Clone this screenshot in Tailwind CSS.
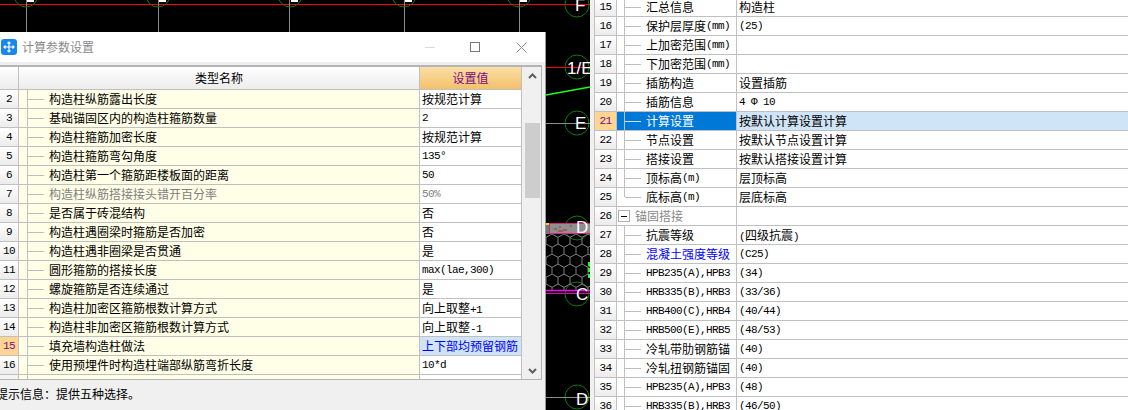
<!DOCTYPE html>
<html lang="en">
<head>
    <meta charset="UTF-8">
    <title>计算参数设置</title>
    <script src="https://cdn.jsdelivr.net/npm/@tailwindcss/browser@4"></script>
</head>
<body class="bg-black">
<div class="flex w-[1128px] h-[410px] overflow-hidden bg-black text-[12px] leading-[18px] text-black font-['Noto_Sans_CJK_SC',sans-serif]">

    <!-- CAD canvas + dialog window -->
    <div class="relative w-[590px] h-[410px] shrink-0">
        <svg class="absolute inset-0" width="590" height="410" viewBox="0 0 590 410" fill="none">
            <defs>
                <pattern id="hex" width="12" height="20" patternUnits="userSpaceOnUse" x="546" y="234">
                    <path d="M6 0L12 3.33V10L6 13.33L0 10V3.33ZM6 13.33V20" stroke="#808080" stroke-width="1"/>
                </pattern>
            </defs>
            <!-- top axis -->
            <path d="M0 4.5H590" stroke="#ff0000"/>
            <path d="M26.5 0V32M158.5 0V32M289.5 0V32M404.5 0V32M519.5 0V32" stroke="#8c8c8c"/>
            <g stroke="#0a7a0a">
                <circle cx="26" cy="-5" r="12"/>
                <circle cx="158" cy="-5" r="12"/>
                <circle cx="290" cy="-5" r="12"/>
                <circle cx="404" cy="-5" r="12"/>
                <circle cx="519" cy="-5" r="12"/>
                <circle cx="577" cy="5" r="12"/>
                <circle cx="577" cy="67" r="12"/>
                <circle cx="577" cy="123" r="12"/>
                <circle cx="577" cy="228" r="12"/>
                <circle cx="577" cy="294" r="12"/>
                <circle cx="577" cy="397" r="12"/>
            </g>
            <path d="M27 1H34M159 1H166M291 1H298M405 1H412M520 1H527" stroke="#ffffff" stroke-width="2"/>
            <path d="M546 67.5H590" stroke="#ff0000"/>
            <path d="M546 95L590 87" stroke="#19ff19" stroke-width="1.5"/>
            <path d="M546 123.5H590M546 397.5H590" stroke="#8c8c8c"/>
            <!-- hatched wall -->
            <rect x="546" y="234" width="44" height="56" fill="url(#hex)"/>
            <rect x="546" y="223" width="4" height="11" fill="#777777"/>
            <rect x="546" y="223" width="4" height="2" fill="#e6e600"/>
            <rect x="549.5" y="223.5" width="41" height="10" fill="#8f8f8f" stroke="#e0207a"/>
            <path d="M554 229h3M559 227h2M563 230h4M570 226h2M558 231h5" stroke="#a03030"/>
            <path d="M546 290.5H590" stroke="#ff00ff" stroke-width="1.5"/>
            <path d="M546 293.5H590" stroke="#e000c0"/>
            <path d="M589 262V280" stroke="#19ff19" stroke-width="2" stroke-dasharray="4 2"/>
            <!-- axis labels -->
            <g fill="#ffffff" font-family="Liberation Sans, sans-serif" font-size="17">
                <text x="575" y="11">F</text>
                <text x="567" y="74">1/E</text>
                <text x="575" y="129">E</text>
                <text x="576" y="233">D</text>
                <text x="576" y="300">C</text>
                <text x="576" y="405">D</text>
            </g>
        </svg>

        <div class="absolute left-0 top-[32px] w-[546px] h-[378px] bg-[#f0f0f0] border-r border-[#9a9a9a] flex flex-col">
            <!-- title bar -->
            <div class="flex items-center h-[30px] bg-white shrink-0">
                <svg class="ml-[1px]" width="16" height="16" viewBox="0 0 16 16" fill="none">
                    <rect width="16" height="16" rx="3" fill="#1787ea"/>
                    <path d="M8 3V13M3 8H13M6.5 4.5L8 3L9.5 4.5M6.5 11.5L8 13L9.5 11.5M4.5 6.5L3 8L4.5 9.5M11.5 6.5L13 8L11.5 9.5" stroke="#ffffff" stroke-width="1.2"/>
                </svg>
                <span class="ml-[5px] text-[#8a8a8a]">计算参数设置</span>
                <div class="ml-auto flex items-center">
                    <span class="w-[10px] h-px bg-[#d8d8d8]"></span>
                    <span class="ml-[35px] w-[10px] h-[10px] border border-[#777777]"></span>
                    <svg class="ml-[36px] mr-[18px]" width="11" height="11" viewBox="0 0 11 11" fill="none">
                        <path d="M0.5 0.5L10.5 10.5M10.5 0.5L0.5 10.5" stroke="#8a8a8a"/>
                    </svg>
                </div>
            </div>

            <!-- grid -->
            <div class="mt-[3px] ml-0 mr-[3px] h-[315px] border-t-2 border-r border-b border-[#b4b4b4] flex overflow-hidden shrink-0">
                <div class="w-[522px] shrink-0 overflow-hidden">
                    <div class="flex h-[23px] border-b border-[#c0c0c0]">
                        <div class="w-[19px] border-r border-[#c0c0c0] bg-linear-to-b from-white to-[#ececec]"></div>
                        <div class="w-[401px] border-r border-[#c0c0c0] bg-linear-to-b from-white to-[#ececec] text-center leading-[22px]">类型名称</div>
                        <div class="w-[102px] border-r border-[#c0c0c0] bg-linear-to-b from-[#fbdfa6] to-[#f3c16b] text-center leading-[22px] text-[#7a0a84]">设置值</div>
                    </div>

                    <div class="flex h-[19px] border-b border-[#c0c0c0]">
                        <div class="w-[19px] border-r border-[#c0c0c0] bg-linear-to-b from-white to-[#ececec] text-center font-['Liberation_Mono'] text-[11px] tracking-[-0.6px]">2</div>
                        <div class="w-[9px] border-r border-[#c0c0c0] bg-[#fffee6]"></div>
                        <div class="w-[392px] border-r border-[#c0c0c0] bg-[#fffee6] flex items-center"><span class="w-[16px] h-px bg-[#bdbdbd] mr-[5px]"></span>构造柱纵筋露出长度</div>
                        <div class="w-[102px] border-r border-[#c0c0c0] bg-white pl-[2px]">按规范计算</div>
                    </div>
                    <div class="flex h-[19px] border-b border-[#c0c0c0]">
                        <div class="w-[19px] border-r border-[#c0c0c0] bg-linear-to-b from-white to-[#ececec] text-center font-['Liberation_Mono'] text-[11px] tracking-[-0.6px]">3</div>
                        <div class="w-[9px] border-r border-[#c0c0c0] bg-[#fffee6]"></div>
                        <div class="w-[392px] border-r border-[#c0c0c0] bg-[#fffee6] flex items-center"><span class="w-[16px] h-px bg-[#bdbdbd] mr-[5px]"></span>基础锚固区内的构造柱箍筋数量</div>
                        <div class="w-[102px] border-r border-[#c0c0c0] bg-white pl-[2px] font-['Liberation_Mono'] text-[11px] tracking-[-0.6px]">2</div>
                    </div>
                    <div class="flex h-[19px] border-b border-[#c0c0c0]">
                        <div class="w-[19px] border-r border-[#c0c0c0] bg-linear-to-b from-white to-[#ececec] text-center font-['Liberation_Mono'] text-[11px] tracking-[-0.6px]">4</div>
                        <div class="w-[9px] border-r border-[#c0c0c0] bg-[#fffee6]"></div>
                        <div class="w-[392px] border-r border-[#c0c0c0] bg-[#fffee6] flex items-center"><span class="w-[16px] h-px bg-[#bdbdbd] mr-[5px]"></span>构造柱箍筋加密长度</div>
                        <div class="w-[102px] border-r border-[#c0c0c0] bg-white pl-[2px]">按规范计算</div>
                    </div>
                    <div class="flex h-[19px] border-b border-[#c0c0c0]">
                        <div class="w-[19px] border-r border-[#c0c0c0] bg-linear-to-b from-white to-[#ececec] text-center font-['Liberation_Mono'] text-[11px] tracking-[-0.6px]">5</div>
                        <div class="w-[9px] border-r border-[#c0c0c0] bg-[#fffee6]"></div>
                        <div class="w-[392px] border-r border-[#c0c0c0] bg-[#fffee6] flex items-center"><span class="w-[16px] h-px bg-[#bdbdbd] mr-[5px]"></span>构造柱箍筋弯勾角度</div>
                        <div class="w-[102px] border-r border-[#c0c0c0] bg-white pl-[2px] font-['Liberation_Mono'] text-[11px] tracking-[-0.6px]">135°</div>
                    </div>
                    <div class="flex h-[19px] border-b border-[#c0c0c0]">
                        <div class="w-[19px] border-r border-[#c0c0c0] bg-linear-to-b from-white to-[#ececec] text-center font-['Liberation_Mono'] text-[11px] tracking-[-0.6px]">6</div>
                        <div class="w-[9px] border-r border-[#c0c0c0] bg-[#fffee6]"></div>
                        <div class="w-[392px] border-r border-[#c0c0c0] bg-[#fffee6] flex items-center"><span class="w-[16px] h-px bg-[#bdbdbd] mr-[5px]"></span>构造柱第一个箍筋距楼板面的距离</div>
                        <div class="w-[102px] border-r border-[#c0c0c0] bg-white pl-[2px] font-['Liberation_Mono'] text-[11px] tracking-[-0.6px]">50</div>
                    </div>
                    <div class="flex h-[19px] border-b border-[#c0c0c0]">
                        <div class="w-[19px] border-r border-[#c0c0c0] bg-linear-to-b from-white to-[#ececec] text-center font-['Liberation_Mono'] text-[11px] tracking-[-0.6px]">7</div>
                        <div class="w-[9px] border-r border-[#c0c0c0] bg-[#fffee6]"></div>
                        <div class="w-[392px] border-r border-[#c0c0c0] bg-[#fffee6] flex items-center text-[#808080]"><span class="w-[16px] h-px bg-[#bdbdbd] mr-[5px]"></span>构造柱纵筋搭接接头错开百分率</div>
                        <div class="w-[102px] border-r border-[#c0c0c0] bg-white pl-[2px] font-['Liberation_Mono'] text-[11px] tracking-[-0.6px] text-[#808080]">50%</div>
                    </div>
                    <div class="flex h-[19px] border-b border-[#c0c0c0]">
                        <div class="w-[19px] border-r border-[#c0c0c0] bg-linear-to-b from-white to-[#ececec] text-center font-['Liberation_Mono'] text-[11px] tracking-[-0.6px]">8</div>
                        <div class="w-[9px] border-r border-[#c0c0c0] bg-[#fffee6]"></div>
                        <div class="w-[392px] border-r border-[#c0c0c0] bg-[#fffee6] flex items-center"><span class="w-[16px] h-px bg-[#bdbdbd] mr-[5px]"></span>是否属于砖混结构</div>
                        <div class="w-[102px] border-r border-[#c0c0c0] bg-white pl-[2px]">否</div>
                    </div>
                    <div class="flex h-[19px] border-b border-[#c0c0c0]">
                        <div class="w-[19px] border-r border-[#c0c0c0] bg-linear-to-b from-white to-[#ececec] text-center font-['Liberation_Mono'] text-[11px] tracking-[-0.6px]">9</div>
                        <div class="w-[9px] border-r border-[#c0c0c0] bg-[#fffee6]"></div>
                        <div class="w-[392px] border-r border-[#c0c0c0] bg-[#fffee6] flex items-center"><span class="w-[16px] h-px bg-[#bdbdbd] mr-[5px]"></span>构造柱遇圈梁时箍筋是否加密</div>
                        <div class="w-[102px] border-r border-[#c0c0c0] bg-white pl-[2px]">否</div>
                    </div>
                    <div class="flex h-[19px] border-b border-[#c0c0c0]">
                        <div class="w-[19px] border-r border-[#c0c0c0] bg-linear-to-b from-white to-[#ececec] text-center font-['Liberation_Mono'] text-[11px] tracking-[-0.6px]">10</div>
                        <div class="w-[9px] border-r border-[#c0c0c0] bg-[#fffee6]"></div>
                        <div class="w-[392px] border-r border-[#c0c0c0] bg-[#fffee6] flex items-center"><span class="w-[16px] h-px bg-[#bdbdbd] mr-[5px]"></span>构造柱遇非圈梁是否贯通</div>
                        <div class="w-[102px] border-r border-[#c0c0c0] bg-white pl-[2px]">是</div>
                    </div>
                    <div class="flex h-[19px] border-b border-[#c0c0c0]">
                        <div class="w-[19px] border-r border-[#c0c0c0] bg-linear-to-b from-white to-[#ececec] text-center font-['Liberation_Mono'] text-[11px] tracking-[-0.6px]">11</div>
                        <div class="w-[9px] border-r border-[#c0c0c0] bg-[#fffee6]"></div>
                        <div class="w-[392px] border-r border-[#c0c0c0] bg-[#fffee6] flex items-center"><span class="w-[16px] h-px bg-[#bdbdbd] mr-[5px]"></span>圆形箍筋的搭接长度</div>
                        <div class="w-[102px] border-r border-[#c0c0c0] bg-white pl-[2px] font-['Liberation_Mono'] text-[11px] tracking-[-0.6px]">max(lae,300)</div>
                    </div>
                    <div class="flex h-[19px] border-b border-[#c0c0c0]">
                        <div class="w-[19px] border-r border-[#c0c0c0] bg-linear-to-b from-white to-[#ececec] text-center font-['Liberation_Mono'] text-[11px] tracking-[-0.6px]">12</div>
                        <div class="w-[9px] border-r border-[#c0c0c0] bg-[#fffee6]"></div>
                        <div class="w-[392px] border-r border-[#c0c0c0] bg-[#fffee6] flex items-center"><span class="w-[16px] h-px bg-[#bdbdbd] mr-[5px]"></span>螺旋箍筋是否连续通过</div>
                        <div class="w-[102px] border-r border-[#c0c0c0] bg-white pl-[2px]">是</div>
                    </div>
                    <div class="flex h-[19px] border-b border-[#c0c0c0]">
                        <div class="w-[19px] border-r border-[#c0c0c0] bg-linear-to-b from-white to-[#ececec] text-center font-['Liberation_Mono'] text-[11px] tracking-[-0.6px]">13</div>
                        <div class="w-[9px] border-r border-[#c0c0c0] bg-[#fffee6]"></div>
                        <div class="w-[392px] border-r border-[#c0c0c0] bg-[#fffee6] flex items-center"><span class="w-[16px] h-px bg-[#bdbdbd] mr-[5px]"></span>构造柱加密区箍筋根数计算方式</div>
                        <div class="w-[102px] border-r border-[#c0c0c0] bg-white pl-[2px]">向上取整<span class="font-['Liberation_Mono'] text-[11px] tracking-[-0.6px]">+1</span></div>
                    </div>
                    <div class="flex h-[19px] border-b border-[#c0c0c0]">
                        <div class="w-[19px] border-r border-[#c0c0c0] bg-linear-to-b from-white to-[#ececec] text-center font-['Liberation_Mono'] text-[11px] tracking-[-0.6px]">14</div>
                        <div class="w-[9px] border-r border-[#c0c0c0] bg-[#fffee6]"></div>
                        <div class="w-[392px] border-r border-[#c0c0c0] bg-[#fffee6] flex items-center"><span class="w-[16px] h-px bg-[#bdbdbd] mr-[5px]"></span>构造柱非加密区箍筋根数计算方式</div>
                        <div class="w-[102px] border-r border-[#c0c0c0] bg-white pl-[2px]">向上取整<span class="font-['Liberation_Mono'] text-[11px] tracking-[-0.6px]">-1</span></div>
                    </div>
                    <div class="flex h-[19px] border-b border-[#c0c0c0]">
                        <div class="w-[19px] border-r border-[#c0c0c0] bg-[#ffd591] text-center font-['Liberation_Mono'] text-[11px] tracking-[-0.6px] text-[#7a0a84]">15</div>
                        <div class="w-[9px] border-r border-[#c0c0c0] bg-[#fffee6]"></div>
                        <div class="w-[392px] border-r border-[#c0c0c0] bg-[#fffee6] flex items-center"><span class="w-[16px] h-px bg-[#bdbdbd] mr-[5px]"></span>填充墙构造柱做法</div>
                        <div class="w-[102px] border-r border-[#c0c0c0] bg-[#cfe4f7] pl-[2px] text-[#0000ff] whitespace-nowrap">上下部均预留钢筋</div>
                    </div>
                    <div class="flex h-[19px] border-b border-[#c0c0c0]">
                        <div class="w-[19px] border-r border-[#c0c0c0] bg-linear-to-b from-white to-[#ececec] text-center font-['Liberation_Mono'] text-[11px] tracking-[-0.6px]">16</div>
                        <div class="w-[9px] border-r border-[#c0c0c0] bg-[#fffee6]"></div>
                        <div class="w-[392px] border-r border-[#c0c0c0] bg-[#fffee6] flex items-center"><span class="w-[16px] h-px bg-[#bdbdbd] mr-[5px]"></span>使用预埋件时构造柱端部纵筋弯折长度</div>
                        <div class="w-[102px] border-r border-[#c0c0c0] bg-white pl-[2px] font-['Liberation_Mono'] text-[11px] tracking-[-0.6px]">10*d</div>
                    </div>
                    <div class="flex h-[19px]">
                        <div class="w-[19px] border-r border-[#c0c0c0] bg-[#f4f4f4]"></div>
                        <div class="w-[9px] border-r border-[#c0c0c0] bg-[#fffee6]"></div>
                        <div class="w-[392px] border-r border-[#c0c0c0] bg-[#fffee6]"></div>
                        <div class="w-[102px] border-r border-[#c0c0c0] bg-white"></div>
                    </div>
                </div>

                <!-- scrollbar -->
                <div class="flex-1 flex flex-col items-center bg-[#f0f0f0] pl-[1px]">
                    <svg class="mt-[6px]" width="9" height="6" viewBox="0 0 9 6" fill="none"><path d="M1 5L4.5 1.5L8 5" stroke="#606060" stroke-width="2"/></svg>
                    <div class="mt-[44px] w-[15px] h-[75px] bg-[#cdcdcd]"></div>
                    <svg class="mt-auto mb-[5px]" width="9" height="6" viewBox="0 0 9 6" fill="none"><path d="M1 1L4.5 4.5L8 1" stroke="#606060" stroke-width="2"/></svg>
                </div>
            </div>

            <div class="ml-[-4px] mt-[5px] whitespace-nowrap">提示信息：提供五种选择。</div>
        </div>
    </div>

    <!-- property panel -->
    <div class="flex-1 h-[410px] overflow-hidden bg-[#f0f0f0] pl-[4px]">
        <div class="h-[432px] mt-[-2px] bg-white border-l border-[#c0c0c0]">
            <div class="flex h-[19px] border-b border-[#c0c0c0]">
                <div class="w-[22px] border-r border-[#c0c0c0] bg-linear-to-b from-white to-[#ececec] text-center font-['Liberation_Mono'] text-[11px] tracking-[-0.6px]">15</div>
                <div class="w-[8px] border-r border-[#c0c0c0]"></div>
                <div class="w-[112px] border-r border-[#c0c0c0] flex items-center whitespace-nowrap overflow-hidden"><span class="w-[16px] h-px bg-[#bdbdbd] mr-[5px] shrink-0"></span>汇总信息</div>
                <div class="flex-1 pl-[2px]">构造柱</div>
            </div>
            <div class="flex h-[19px] border-b border-[#c0c0c0]">
                <div class="w-[22px] border-r border-[#c0c0c0] bg-linear-to-b from-white to-[#ececec] text-center font-['Liberation_Mono'] text-[11px] tracking-[-0.6px]">16</div>
                <div class="w-[8px] border-r border-[#c0c0c0]"></div>
                <div class="w-[112px] border-r border-[#c0c0c0] flex items-center whitespace-nowrap overflow-hidden"><span class="w-[16px] h-px bg-[#bdbdbd] mr-[5px] shrink-0"></span>保护层厚度<span class="font-['Liberation_Mono'] text-[11px] tracking-[-0.6px]">(mm)</span></div>
                <div class="flex-1 pl-[2px] font-['Liberation_Mono'] text-[11px] tracking-[-0.6px]">(25)</div>
            </div>
            <div class="flex h-[19px] border-b border-[#c0c0c0]">
                <div class="w-[22px] border-r border-[#c0c0c0] bg-linear-to-b from-white to-[#ececec] text-center font-['Liberation_Mono'] text-[11px] tracking-[-0.6px]">17</div>
                <div class="w-[8px] border-r border-[#c0c0c0]"></div>
                <div class="w-[112px] border-r border-[#c0c0c0] flex items-center whitespace-nowrap overflow-hidden"><span class="w-[16px] h-px bg-[#bdbdbd] mr-[5px] shrink-0"></span>上加密范围<span class="font-['Liberation_Mono'] text-[11px] tracking-[-0.6px]">(mm)</span></div>
                <div class="flex-1 pl-[2px]"></div>
            </div>
            <div class="flex h-[19px] border-b border-[#c0c0c0]">
                <div class="w-[22px] border-r border-[#c0c0c0] bg-linear-to-b from-white to-[#ececec] text-center font-['Liberation_Mono'] text-[11px] tracking-[-0.6px]">18</div>
                <div class="w-[8px] border-r border-[#c0c0c0]"></div>
                <div class="w-[112px] border-r border-[#c0c0c0] flex items-center whitespace-nowrap overflow-hidden"><span class="w-[16px] h-px bg-[#bdbdbd] mr-[5px] shrink-0"></span>下加密范围<span class="font-['Liberation_Mono'] text-[11px] tracking-[-0.6px]">(mm)</span></div>
                <div class="flex-1 pl-[2px]"></div>
            </div>
            <div class="flex h-[19px] border-b border-[#c0c0c0]">
                <div class="w-[22px] border-r border-[#c0c0c0] bg-linear-to-b from-white to-[#ececec] text-center font-['Liberation_Mono'] text-[11px] tracking-[-0.6px]">19</div>
                <div class="w-[8px] border-r border-[#c0c0c0]"></div>
                <div class="w-[112px] border-r border-[#c0c0c0] flex items-center whitespace-nowrap overflow-hidden"><span class="w-[16px] h-px bg-[#bdbdbd] mr-[5px] shrink-0"></span>插筋构造</div>
                <div class="flex-1 pl-[2px]">设置插筋</div>
            </div>
            <div class="flex h-[19px] border-b border-[#c0c0c0]">
                <div class="w-[22px] border-r border-[#c0c0c0] bg-linear-to-b from-white to-[#ececec] text-center font-['Liberation_Mono'] text-[11px] tracking-[-0.6px]">20</div>
                <div class="w-[8px] border-r border-[#c0c0c0]"></div>
                <div class="w-[112px] border-r border-[#c0c0c0] flex items-center whitespace-nowrap overflow-hidden"><span class="w-[16px] h-px bg-[#bdbdbd] mr-[5px] shrink-0"></span>插筋信息</div>
                <div class="flex-1 pl-[2px] font-['Liberation_Mono'] text-[11px] tracking-[-0.6px]">4 Φ 10</div>
            </div>
            <div class="flex h-[19px] border-b border-[#c0c0c0]">
                <div class="w-[22px] border-r border-[#c0c0c0] bg-[#ffd591] text-center font-['Liberation_Mono'] text-[11px] tracking-[-0.6px] text-[#7a0a84]">21</div>
                <div class="w-[8px] border-r border-[#c0c0c0] bg-[#0078d7]"></div>
                <div class="w-[112px] border-r border-[#c0c0c0] bg-[#0078d7] text-white flex items-center whitespace-nowrap overflow-hidden"><span class="w-[16px] h-px bg-[#cfe4f7] mr-[5px] shrink-0"></span>计算设置</div>
                <div class="flex-1 pl-[2px] bg-[#cfe4f7]">按默认计算设置计算</div>
            </div>
            <div class="flex h-[19px] border-b border-[#c0c0c0]">
                <div class="w-[22px] border-r border-[#c0c0c0] bg-linear-to-b from-white to-[#ececec] text-center font-['Liberation_Mono'] text-[11px] tracking-[-0.6px]">22</div>
                <div class="w-[8px] border-r border-[#c0c0c0]"></div>
                <div class="w-[112px] border-r border-[#c0c0c0] flex items-center whitespace-nowrap overflow-hidden"><span class="w-[16px] h-px bg-[#bdbdbd] mr-[5px] shrink-0"></span>节点设置</div>
                <div class="flex-1 pl-[2px]">按默认节点设置计算</div>
            </div>
            <div class="flex h-[19px] border-b border-[#c0c0c0]">
                <div class="w-[22px] border-r border-[#c0c0c0] bg-linear-to-b from-white to-[#ececec] text-center font-['Liberation_Mono'] text-[11px] tracking-[-0.6px]">23</div>
                <div class="w-[8px] border-r border-[#c0c0c0]"></div>
                <div class="w-[112px] border-r border-[#c0c0c0] flex items-center whitespace-nowrap overflow-hidden"><span class="w-[16px] h-px bg-[#bdbdbd] mr-[5px] shrink-0"></span>搭接设置</div>
                <div class="flex-1 pl-[2px]">按默认搭接设置计算</div>
            </div>
            <div class="flex h-[19px] border-b border-[#c0c0c0]">
                <div class="w-[22px] border-r border-[#c0c0c0] bg-linear-to-b from-white to-[#ececec] text-center font-['Liberation_Mono'] text-[11px] tracking-[-0.6px]">24</div>
                <div class="w-[8px] border-r border-[#c0c0c0]"></div>
                <div class="w-[112px] border-r border-[#c0c0c0] flex items-center whitespace-nowrap overflow-hidden"><span class="w-[16px] h-px bg-[#bdbdbd] mr-[5px] shrink-0"></span>顶标高<span class="font-['Liberation_Mono'] text-[11px] tracking-[-0.6px]">(m)</span></div>
                <div class="flex-1 pl-[2px]">层顶标高</div>
            </div>
            <div class="flex h-[19px] border-b border-[#c0c0c0]">
                <div class="w-[22px] border-r border-[#c0c0c0] bg-linear-to-b from-white to-[#ececec] text-center font-['Liberation_Mono'] text-[11px] tracking-[-0.6px]">25</div>
                <div class="w-[8px]"><div class="h-[9px] border-r border-[#c0c0c0]"></div></div>
                <div class="w-[112px] border-r border-[#c0c0c0] flex items-center whitespace-nowrap overflow-hidden"><span class="w-[16px] h-px bg-[#bdbdbd] mr-[5px] shrink-0"></span>底标高<span class="font-['Liberation_Mono'] text-[11px] tracking-[-0.6px]">(m)</span></div>
                <div class="flex-1 pl-[2px]">层底标高</div>
            </div>
            <div class="flex h-[19px] border-b border-[#c0c0c0]">
                <div class="w-[22px] border-r border-[#c0c0c0] bg-linear-to-b from-white to-[#ececec] text-center font-['Liberation_Mono'] text-[11px] tracking-[-0.6px]">26</div>
                <div class="w-[120px] border-r border-[#c0c0c0] flex items-center text-[#888888]">
                    <span class="ml-[1px] mr-[5px] w-[12px] h-[12px] border border-[#b0b0b0] flex items-center justify-center"><span class="w-[6px] h-px bg-black"></span></span>锚固搭接
                </div>
                <div class="flex-1 pl-[2px]"></div>
            </div>
            <div class="flex h-[19px] border-b border-[#c0c0c0]">
                <div class="w-[22px] border-r border-[#c0c0c0] bg-linear-to-b from-white to-[#ececec] text-center font-['Liberation_Mono'] text-[11px] tracking-[-0.6px]">27</div>
                <div class="w-[8px] border-r border-[#c0c0c0]"></div>
                <div class="w-[112px] border-r border-[#c0c0c0] flex items-center whitespace-nowrap overflow-hidden"><span class="w-[16px] h-px bg-[#bdbdbd] mr-[5px] shrink-0"></span>抗震等级</div>
                <div class="flex-1 pl-[2px]"><span class="font-['Liberation_Mono'] text-[11px] tracking-[-0.6px]">(</span>四级抗震<span class="font-['Liberation_Mono'] text-[11px] tracking-[-0.6px]">)</span></div>
            </div>
            <div class="flex h-[19px] border-b border-[#c0c0c0]">
                <div class="w-[22px] border-r border-[#c0c0c0] bg-linear-to-b from-white to-[#ececec] text-center font-['Liberation_Mono'] text-[11px] tracking-[-0.6px]">28</div>
                <div class="w-[8px] border-r border-[#c0c0c0]"></div>
                <div class="w-[112px] border-r border-[#c0c0c0] flex items-center whitespace-nowrap overflow-hidden text-[#0000ff]"><span class="w-[16px] h-px bg-[#bdbdbd] mr-[5px] shrink-0"></span>混凝土强度等级</div>
                <div class="flex-1 pl-[2px] font-['Liberation_Mono'] text-[11px] tracking-[-0.6px]">(C25)</div>
            </div>
            <div class="flex h-[19px] border-b border-[#c0c0c0]">
                <div class="w-[22px] border-r border-[#c0c0c0] bg-linear-to-b from-white to-[#ececec] text-center font-['Liberation_Mono'] text-[11px] tracking-[-0.6px]">29</div>
                <div class="w-[8px] border-r border-[#c0c0c0]"></div>
                <div class="w-[112px] border-r border-[#c0c0c0] flex items-center whitespace-nowrap overflow-hidden font-['Liberation_Mono'] text-[11px] tracking-[-0.6px]"><span class="w-[16px] h-px bg-[#bdbdbd] mr-[5px] shrink-0"></span>HPB235(A),HPB3</div>
                <div class="flex-1 pl-[2px] font-['Liberation_Mono'] text-[11px] tracking-[-0.6px]">(34)</div>
            </div>
            <div class="flex h-[19px] border-b border-[#c0c0c0]">
                <div class="w-[22px] border-r border-[#c0c0c0] bg-linear-to-b from-white to-[#ececec] text-center font-['Liberation_Mono'] text-[11px] tracking-[-0.6px]">30</div>
                <div class="w-[8px] border-r border-[#c0c0c0]"></div>
                <div class="w-[112px] border-r border-[#c0c0c0] flex items-center whitespace-nowrap overflow-hidden font-['Liberation_Mono'] text-[11px] tracking-[-0.6px]"><span class="w-[16px] h-px bg-[#bdbdbd] mr-[5px] shrink-0"></span>HRB335(B),HRB3</div>
                <div class="flex-1 pl-[2px] font-['Liberation_Mono'] text-[11px] tracking-[-0.6px]">(33/36)</div>
            </div>
            <div class="flex h-[19px] border-b border-[#c0c0c0]">
                <div class="w-[22px] border-r border-[#c0c0c0] bg-linear-to-b from-white to-[#ececec] text-center font-['Liberation_Mono'] text-[11px] tracking-[-0.6px]">31</div>
                <div class="w-[8px] border-r border-[#c0c0c0]"></div>
                <div class="w-[112px] border-r border-[#c0c0c0] flex items-center whitespace-nowrap overflow-hidden font-['Liberation_Mono'] text-[11px] tracking-[-0.6px]"><span class="w-[16px] h-px bg-[#bdbdbd] mr-[5px] shrink-0"></span>HRB400(C),HRB4</div>
                <div class="flex-1 pl-[2px] font-['Liberation_Mono'] text-[11px] tracking-[-0.6px]">(40/44)</div>
            </div>
            <div class="flex h-[19px] border-b border-[#c0c0c0]">
                <div class="w-[22px] border-r border-[#c0c0c0] bg-linear-to-b from-white to-[#ececec] text-center font-['Liberation_Mono'] text-[11px] tracking-[-0.6px]">32</div>
                <div class="w-[8px] border-r border-[#c0c0c0]"></div>
                <div class="w-[112px] border-r border-[#c0c0c0] flex items-center whitespace-nowrap overflow-hidden font-['Liberation_Mono'] text-[11px] tracking-[-0.6px]"><span class="w-[16px] h-px bg-[#bdbdbd] mr-[5px] shrink-0"></span>HRB500(E),HRB5</div>
                <div class="flex-1 pl-[2px] font-['Liberation_Mono'] text-[11px] tracking-[-0.6px]">(48/53)</div>
            </div>
            <div class="flex h-[19px] border-b border-[#c0c0c0]">
                <div class="w-[22px] border-r border-[#c0c0c0] bg-linear-to-b from-white to-[#ececec] text-center font-['Liberation_Mono'] text-[11px] tracking-[-0.6px]">33</div>
                <div class="w-[8px] border-r border-[#c0c0c0]"></div>
                <div class="w-[112px] border-r border-[#c0c0c0] flex items-center whitespace-nowrap overflow-hidden"><span class="w-[16px] h-px bg-[#bdbdbd] mr-[5px] shrink-0"></span>冷轧带肋钢筋锚</div>
                <div class="flex-1 pl-[2px] font-['Liberation_Mono'] text-[11px] tracking-[-0.6px]">(40)</div>
            </div>
            <div class="flex h-[19px] border-b border-[#c0c0c0]">
                <div class="w-[22px] border-r border-[#c0c0c0] bg-linear-to-b from-white to-[#ececec] text-center font-['Liberation_Mono'] text-[11px] tracking-[-0.6px]">34</div>
                <div class="w-[8px] border-r border-[#c0c0c0]"></div>
                <div class="w-[112px] border-r border-[#c0c0c0] flex items-center whitespace-nowrap overflow-hidden"><span class="w-[16px] h-px bg-[#bdbdbd] mr-[5px] shrink-0"></span>冷轧扭钢筋锚固</div>
                <div class="flex-1 pl-[2px] font-['Liberation_Mono'] text-[11px] tracking-[-0.6px]">(40)</div>
            </div>
            <div class="flex h-[19px] border-b border-[#c0c0c0]">
                <div class="w-[22px] border-r border-[#c0c0c0] bg-linear-to-b from-white to-[#ececec] text-center font-['Liberation_Mono'] text-[11px] tracking-[-0.6px]">35</div>
                <div class="w-[8px] border-r border-[#c0c0c0]"></div>
                <div class="w-[112px] border-r border-[#c0c0c0] flex items-center whitespace-nowrap overflow-hidden font-['Liberation_Mono'] text-[11px] tracking-[-0.6px]"><span class="w-[16px] h-px bg-[#bdbdbd] mr-[5px] shrink-0"></span>HPB235(A),HPB3</div>
                <div class="flex-1 pl-[2px] font-['Liberation_Mono'] text-[11px] tracking-[-0.6px]">(48)</div>
            </div>
            <div class="flex h-[19px] border-b border-[#c0c0c0]">
                <div class="w-[22px] border-r border-[#c0c0c0] bg-linear-to-b from-white to-[#ececec] text-center font-['Liberation_Mono'] text-[11px] tracking-[-0.6px]">36</div>
                <div class="w-[8px] border-r border-[#c0c0c0]"></div>
                <div class="w-[112px] border-r border-[#c0c0c0] flex items-center whitespace-nowrap overflow-hidden font-['Liberation_Mono'] text-[11px] tracking-[-0.6px]"><span class="w-[16px] h-px bg-[#bdbdbd] mr-[5px] shrink-0"></span>HRB335(B),HRB3</div>
                <div class="flex-1 pl-[2px] font-['Liberation_Mono'] text-[11px] tracking-[-0.6px]">(46/50)</div>
            </div>
        </div>
    </div>
</div>
</body>
</html>
